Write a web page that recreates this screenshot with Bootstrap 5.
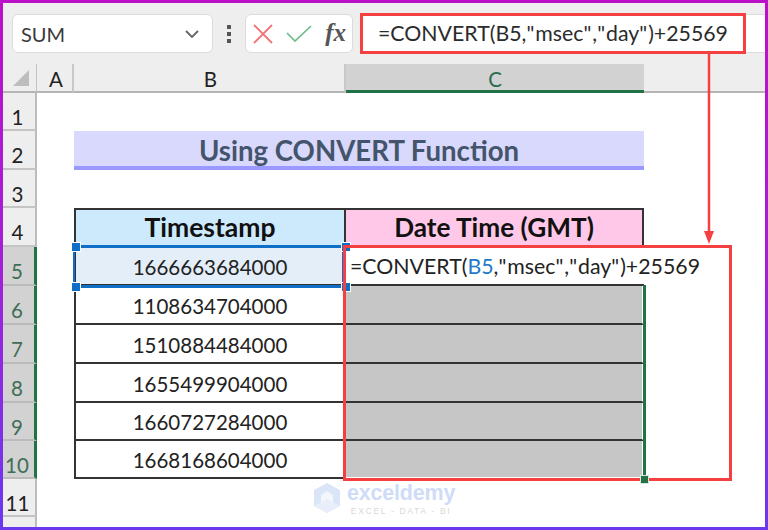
<!DOCTYPE html>
<html lang="en">
<head>
<meta charset="utf-8">
<title>Using CONVERT Function</title>
<link href="https://cdn.jsdelivr.net/npm/bootstrap@5.3.0/dist/css/bootstrap.min.css" rel="stylesheet">
<style>
html,body{margin:0;width:768px;height:530px;overflow:hidden;background:#fff}
.shot{width:768px;height:530px;padding:3px;background:linear-gradient(180deg,#bb10c8 0%,#a420d8 50%,#6a38f0 100%);position:relative;font-family:Lato,"Liberation Sans",sans-serif;color:#222}
.shot-in{width:762px;height:524px;background:#fff;position:relative;overflow:hidden}
.ribbon{height:61px;background:#eeeeee;padding:11px 0 0 9px}
.namebox{width:201px;height:39px;background:#fff;border:1px solid #dcdcdc;border-radius:6px;padding:0 12px 0 8px;font-size:20px;color:#3a3a3a}
.vdots{width:32px;height:39px;gap:3px}
.vdots i{display:block;width:4px;height:4px;background:#555}
.fxbox{width:108px;height:39px;background:#fff;border:1px solid #dcdcdc;border-radius:6px;padding:0 6px 0 7px}
.fxtxt{font-family:"Liberation Serif",serif;font-style:italic;font-weight:700;font-size:25px;color:#555;line-height:1;padding-bottom:3px}
.fbar{flex:1;height:39px;background:#fff;margin-left:7px;border-top:1px solid #dcdcdc;border-bottom:1px solid #dcdcdc;font-size:21.3px;padding-left:18px;color:#2b2b2b}
.qm{letter-spacing:1px}
.sheet{display:grid;grid-template-columns:34px 37px 272px 298px 121px;grid-template-rows:29px 38px 39px 38px 39px 39px 39px 39px 39px 38px 38px 38px 10px;height:463px;background:#fff}
.corner,.colh,.rowh{background:#eeeeee;display:flex;align-items:center;justify-content:center;font-size:20.5px;color:#222}
.corner{border-right:1px solid #c4c4c4;border-bottom:2px solid #b5b5b5}
.corner svg{display:block;margin:0 6px 0 auto}
.colh{border-right:2px solid #c8c8c8;border-bottom:2px solid #b5b5b5;padding:4px 0 0 3px}
.colh-on{background:#d2d2d2;border-right:0;border-bottom:3px solid #217346;color:#2d6a4f;padding-left:0}
.colh-end{background:#eee;border-right:0}
.rowh{border-right:2px solid #bdbdbd;border-bottom:2px solid #c4c4c4;padding:12px 3px 0 0}
.rowh-on{background:#d2d2d2;border-right:3px solid #217346;border-bottom:2px solid #bbb;color:#3f6e55}
.blank{background:#fff}
.ttl{grid-column:3 / 5;background:#d9d8fd;border-bottom:4px solid #9999ff;font-weight:700;font-size:27.6px;color:#44546a;display:flex;align-items:center;justify-content:center;padding-top:4px}
.tcell{border:solid #333;border-width:0 2px 2px 2px;display:flex;align-items:center;justify-content:center;font-size:20.5px;color:#222;padding-top:3px}
.tcell+.tcell{border-left:0}
.th1{background:#cdeafd;font-weight:700;border-top-width:2px;font-size:26.5px;color:#111;padding-top:1px}
.th2{background:#ffc8e8;font-weight:700;border-top-width:2px;font-size:26.2px;color:#111;padding-top:1px}
.b5{background:#e3eef8}
.greyc{background:#c6c6c6;border-right-color:#fff}
.greyc-end{border-bottom-color:#fff}
.frm{position:relative;z-index:1;background:#fff;padding-left:4px;white-space:nowrap;border-left:0;border-right:0;justify-content:flex-start;font-size:21.3px}
.frm b{font-weight:400;color:#2179c9}
.red{position:absolute;border:3px solid #f44040;pointer-events:none;z-index:3}
.red-f{left:357px;top:10px;width:386px;height:41px}
.red-s{left:340px;top:242px;width:389px;height:236px}
.seln{position:absolute;z-index:2;left:70px;top:242px;width:272px;height:43px;border:3px solid #0f6fc6;border-left-width:2px;pointer-events:none}
.hnd{position:absolute;z-index:2;width:8px;height:8px;background:#0f6fc6;border:1px solid #fff;box-sizing:content-box}
.grn{position:absolute;z-index:2;left:640px;top:282px;width:3px;height:193px;background:#217346}
.grnh{position:absolute;z-index:4;left:637px;top:472px;width:9px;height:9px;background:#217346;border:1px solid #d8e8de}
.arrow{position:absolute;z-index:3;left:696px;top:50px;pointer-events:none}
.wm{position:absolute;z-index:2;left:310px;top:477px;gap:6px}
.wm-a{font-family:"Liberation Sans",sans-serif;font-weight:700;font-size:21.500px;line-height:26px;color:#cfdcf8;display:block;letter-spacing:-.2px}
.wm-b{font-family:"Liberation Sans",sans-serif;font-size:8.5px;line-height:10px;letter-spacing:1.7px;color:#d8d8d8;display:block;text-align:center}
</style>
</head>
<body>
<div class="shot"><div class="shot-in">
  <div class="ribbon d-flex align-items-start">
    <div class="namebox d-flex align-items-center justify-content-between">
      <span>SUM</span>
      <svg width="16" height="10" viewBox="0 0 16 10"><path d="M2 2l6 6 6-6" fill="none" stroke="#666" stroke-width="1.8"/></svg>
    </div>
    <div class="vdots d-flex flex-column align-items-center justify-content-center"><i></i><i></i><i></i></div>
    <div class="fxbox d-flex align-items-center justify-content-between">
      <svg width="20" height="20" viewBox="0 0 20 20"><path d="M1 1l18 18M19 1L1 19" stroke="#f47378" stroke-width="1.8" fill="none"/></svg>
      <svg width="26" height="18" viewBox="0 0 26 18"><path d="M1 8l8 8L25 1" stroke="#6fbb88" stroke-width="1.7" fill="none"/></svg>
      <span class="fxtxt">fx</span>
    </div>
    <div class="fbar d-flex align-items-center"><span>=CONVERT(B5,<span class="qm">"</span>msec<span class="qm">"</span>,<span class="qm">"</span>day<span class="qm">"</span>)+25569</span></div>
  </div>
  <div class="sheet">
    <div class="corner"><svg width="18" height="18" viewBox="0 0 18 18"><path d="M17 1v16H1z" fill="#bdbdbd"/></svg></div>
    <div class="colh">A</div><div class="colh">B</div><div class="colh colh-on">C</div><div class="colh colh-end"></div>

    <div class="rowh">1</div><div class="blank"></div><div class="blank"></div><div class="blank"></div><div class="blank"></div>
    <div class="rowh">2</div><div class="blank"></div><div class="ttl">Using CONVERT Function</div><div class="blank"></div>
    <div class="rowh">3</div><div class="blank"></div><div class="blank"></div><div class="blank"></div><div class="blank"></div>
    <div class="rowh">4</div><div class="blank"></div><div class="tcell th1">Timestamp</div><div class="tcell th2">Date Time (GMT)</div><div class="blank"></div>
    <div class="rowh rowh-on">5</div><div class="blank"></div><div class="tcell b5">1666663684000</div><div class="tcell frm"><span>=CONVERT(<b>B5</b>,<span class="qm">"</span>msec<span class="qm">"</span>,<span class="qm">"</span>day<span class="qm">"</span>)+25569</span></div><div class="blank"></div>
    <div class="rowh rowh-on">6</div><div class="blank"></div><div class="tcell">1108634704000</div><div class="tcell greyc"></div><div class="blank"></div>
    <div class="rowh rowh-on">7</div><div class="blank"></div><div class="tcell">1510884484000</div><div class="tcell greyc"></div><div class="blank"></div>
    <div class="rowh rowh-on">8</div><div class="blank"></div><div class="tcell">1655499904000</div><div class="tcell greyc"></div><div class="blank"></div>
    <div class="rowh rowh-on">9</div><div class="blank"></div><div class="tcell">1660727284000</div><div class="tcell greyc"></div><div class="blank"></div>
    <div class="rowh rowh-on">10</div><div class="blank"></div><div class="tcell">1668168604000</div><div class="tcell greyc greyc-end"></div><div class="blank"></div>
    <div class="rowh">11</div><div class="blank"></div><div class="blank"></div><div class="blank"></div><div class="blank"></div>
    <div class="rowh"></div><div class="blank"></div><div class="blank"></div><div class="blank"></div><div class="blank"></div>
  </div>

  <div class="seln"></div>
  <span class="hnd" style="left:68px;top:239px"></span>
  <span class="hnd" style="left:338px;top:239px"></span>
  <span class="hnd" style="left:68px;top:279px"></span>
  <span class="hnd" style="left:338px;top:279px"></span>
  <div class="red red-f"></div>
  <div class="red red-s"></div>
  <svg class="arrow" width="20" height="196" viewBox="0 0 20 196"><path d="M10 0V182" stroke="#f44040" stroke-width="2.500"/><path d="M5 178h10l-5 13z" fill="#f44040"/></svg>
  <div class="grn"></div><div class="grnh"></div>
  <div class="wm d-flex align-items-center">
    <svg width="28" height="32" viewBox="0 0 28 32"><path d="M14 1l13 7v16l-13 7-13-7V8z" fill="#dbe5f8"/><path d="M14 9l6 4v7l-6 4-6-4v-7z" fill="#f3f6fc"/><path d="M1 24l13-7 13 7-13 7z" fill="#e8eefa"/></svg>
    <div><span class="wm-a">exceldemy</span><span class="wm-b">EXCEL - DATA - BI</span></div>
  </div>
</div></div>
</body>
</html>
